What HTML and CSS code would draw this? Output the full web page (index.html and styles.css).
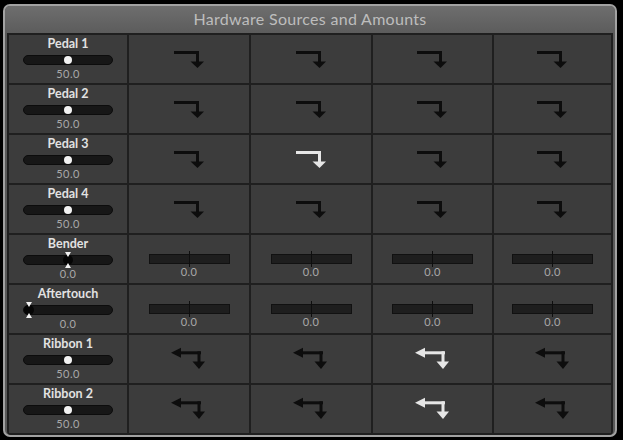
FILE: index.html
```html
<!DOCTYPE html>
<html>
<head>
<meta charset="utf-8">
<link rel="stylesheet" href="styles.css">
</head>
<body>
<svg class="defs" width="0" height="0">
  <defs>
    <symbol id="rd" viewBox="0 0 30 17">
      <rect x="0" y="0" width="25" height="3"/>
      <rect x="22" y="0" width="3" height="11"/>
      <polygon points="16.5,10.5 30,10.5 23.5,17"/>
    </symbol>
    <symbol id="lrd" viewBox="0 0 34 22">
      <polygon points="0,5.8 10,0.8 10,10.8"/>
      <rect x="9" y="4.3" width="21" height="3"/>
      <rect x="26.5" y="4.3" width="3" height="11"/>
      <polygon points="21.5,14.5 34,14.5 28,22"/>
    </symbol>
  </defs>
</svg>
<div class="panel">
  <div class="title">Hardware Sources and Amounts</div>
  <div class="grid">
    <!-- Pedal 1 -->
    <div class="cell src"><div class="lbl">Pedal 1</div><div class="track"><span class="knob"></span></div><div class="val">50.0</div></div>
    <div class="cell"><svg class="arr"><use href="#rd"/></svg></div>
    <div class="cell"><svg class="arr"><use href="#rd"/></svg></div>
    <div class="cell"><svg class="arr"><use href="#rd"/></svg></div>
    <div class="cell"><svg class="arr"><use href="#rd"/></svg></div>
    <!-- Pedal 2 -->
    <div class="cell src"><div class="lbl">Pedal 2</div><div class="track"><span class="knob"></span></div><div class="val">50.0</div></div>
    <div class="cell"><svg class="arr"><use href="#rd"/></svg></div>
    <div class="cell"><svg class="arr"><use href="#rd"/></svg></div>
    <div class="cell"><svg class="arr"><use href="#rd"/></svg></div>
    <div class="cell"><svg class="arr"><use href="#rd"/></svg></div>
    <!-- Pedal 3 -->
    <div class="cell src"><div class="lbl">Pedal 3</div><div class="track"><span class="knob"></span></div><div class="val">50.0</div></div>
    <div class="cell"><svg class="arr"><use href="#rd"/></svg></div>
    <div class="cell"><svg class="arr on"><use href="#rd"/></svg></div>
    <div class="cell"><svg class="arr"><use href="#rd"/></svg></div>
    <div class="cell"><svg class="arr"><use href="#rd"/></svg></div>
    <!-- Pedal 4 -->
    <div class="cell src"><div class="lbl">Pedal 4</div><div class="track"><span class="knob"></span></div><div class="val">50.0</div></div>
    <div class="cell"><svg class="arr"><use href="#rd"/></svg></div>
    <div class="cell"><svg class="arr"><use href="#rd"/></svg></div>
    <div class="cell"><svg class="arr"><use href="#rd"/></svg></div>
    <div class="cell"><svg class="arr"><use href="#rd"/></svg></div>
    <!-- Bender -->
    <div class="cell src"><div class="lbl">Bender</div><div class="track"><span class="bknob mid"></span></div><div class="val">0.0</div></div>
    <div class="cell amt"><div class="bar"></div><div class="val">0.0</div></div>
    <div class="cell amt"><div class="bar"></div><div class="val">0.0</div></div>
    <div class="cell amt"><div class="bar"></div><div class="val">0.0</div></div>
    <div class="cell amt"><div class="bar"></div><div class="val">0.0</div></div>
    <!-- Aftertouch -->
    <div class="cell src"><div class="lbl">Aftertouch</div><div class="track"><span class="bknob start"></span></div><div class="val">0.0</div></div>
    <div class="cell amt"><div class="bar"></div><div class="val">0.0</div></div>
    <div class="cell amt"><div class="bar"></div><div class="val">0.0</div></div>
    <div class="cell amt"><div class="bar"></div><div class="val">0.0</div></div>
    <div class="cell amt"><div class="bar"></div><div class="val">0.0</div></div>
    <!-- Ribbon 1 -->
    <div class="cell src"><div class="lbl">Ribbon 1</div><div class="track"><span class="knob"></span></div><div class="val">50.0</div></div>
    <div class="cell"><svg class="arr2"><use href="#lrd"/></svg></div>
    <div class="cell"><svg class="arr2"><use href="#lrd"/></svg></div>
    <div class="cell"><svg class="arr2 on"><use href="#lrd"/></svg></div>
    <div class="cell"><svg class="arr2"><use href="#lrd"/></svg></div>
    <!-- Ribbon 2 -->
    <div class="cell src"><div class="lbl">Ribbon 2</div><div class="track"><span class="knob"></span></div><div class="val">50.0</div></div>
    <div class="cell"><svg class="arr2"><use href="#lrd"/></svg></div>
    <div class="cell"><svg class="arr2"><use href="#lrd"/></svg></div>
    <div class="cell"><svg class="arr2 on"><use href="#lrd"/></svg></div>
    <div class="cell"><svg class="arr2"><use href="#lrd"/></svg></div>
  </div>
</div>
</body>
</html>
```
FILE: styles.css
```css
html, body {
  margin: 0;
  padding: 0;
  background: #000;
}
body {
  font-family: Lato, "Open Sans", sans-serif;
  width: 623px;
  height: 440px;
  overflow: hidden;
}
.defs {
  position: absolute;
  width: 0;
  height: 0;
}
.panel {
  margin: 4px 0 0 3px;
  width: 610px;
  border: 2px solid #a2a2a2;
  border-radius: 7px;
  background: #5a5a5a;
}
.title {
  height: 27px;
  line-height: 25px;
  text-align: center;
  color: #bdbdbd;
  font-size: 16px;
  letter-spacing: 0.3px;
  background: linear-gradient(#6e6e6e, #5c5c5c);
  border-radius: 5px 5px 0 0;
}
.grid {
  margin: 0 2px;
  padding: 2px;
  background: #1f1f1f;
  display: grid;
  grid-template-columns: 118px 120px 120px 119px 117px;
  grid-auto-rows: 48px;
  gap: 2px;
  border-radius: 0 0 4px 4px;
}
.cell {
  background: #3c3c3c;
  display: flex;
  align-items: center;
  justify-content: center;
}
.src, .amt {
  flex-direction: column;
  justify-content: flex-start;
}
.lbl {
  margin-top: 2px;
  height: 13px;
  line-height: 13px;
  font-size: 12.5px;
  font-weight: bold;
  color: #e2e2e2;
}
.track {
  position: relative;
  margin-top: 5px;
  width: 88px;
  height: 8px;
  border: 1px solid #0c0c0c;
  border-radius: 5px;
  background: #171717;
}
.knob {
  position: absolute;
  left: 40px;
  top: 0;
  width: 8px;
  height: 8px;
  border-radius: 50%;
  background: #f4f4f4;
}
.bknob {
  position: absolute;
  top: -1px;
  width: 10px;
  height: 10px;
  border-radius: 50%;
  background: #050505;
}
.bknob.mid { left: 39px; }
.bknob.start { left: 0; }
.bknob::before, .bknob::after {
  content: "";
  position: absolute;
  left: 1.5px;
  width: 0;
  height: 0;
  border-left: 3.5px solid transparent;
  border-right: 3.5px solid transparent;
}
.bknob::before {
  top: -3px;
  border-top: 5px solid #f2f2f2;
}
.bknob::after {
  bottom: -3px;
  border-bottom: 5px solid #f2f2f2;
}
.val {
  margin-top: 3px;
  height: 12px;
  line-height: 12px;
  font-size: 11px;
  color: #a9a9a9;
  letter-spacing: 0.4px;
}
.amt .bar {
  position: relative;
  margin-top: 19px;
  width: 79px;
  height: 8px;
  border: 1px solid #111;
  background: #1e1e1e;
}
.amt .bar::after {
  content: "";
  position: absolute;
  left: 39px;
  top: -4px;
  width: 1px;
  height: 16px;
  background: #0e0e0e;
}
.amt .val {
  margin-top: 2px;
}
.arr {
  width: 30px;
  height: 17px;
  fill: #0d0d0d;
  margin-left: -1px;
}
.arr2 {
  width: 34px;
  height: 22px;
  fill: #0d0d0d;
  margin-left: -2px;
  margin-top: -2px;
}
.on {
  fill: #e6e6e6;
}
```
